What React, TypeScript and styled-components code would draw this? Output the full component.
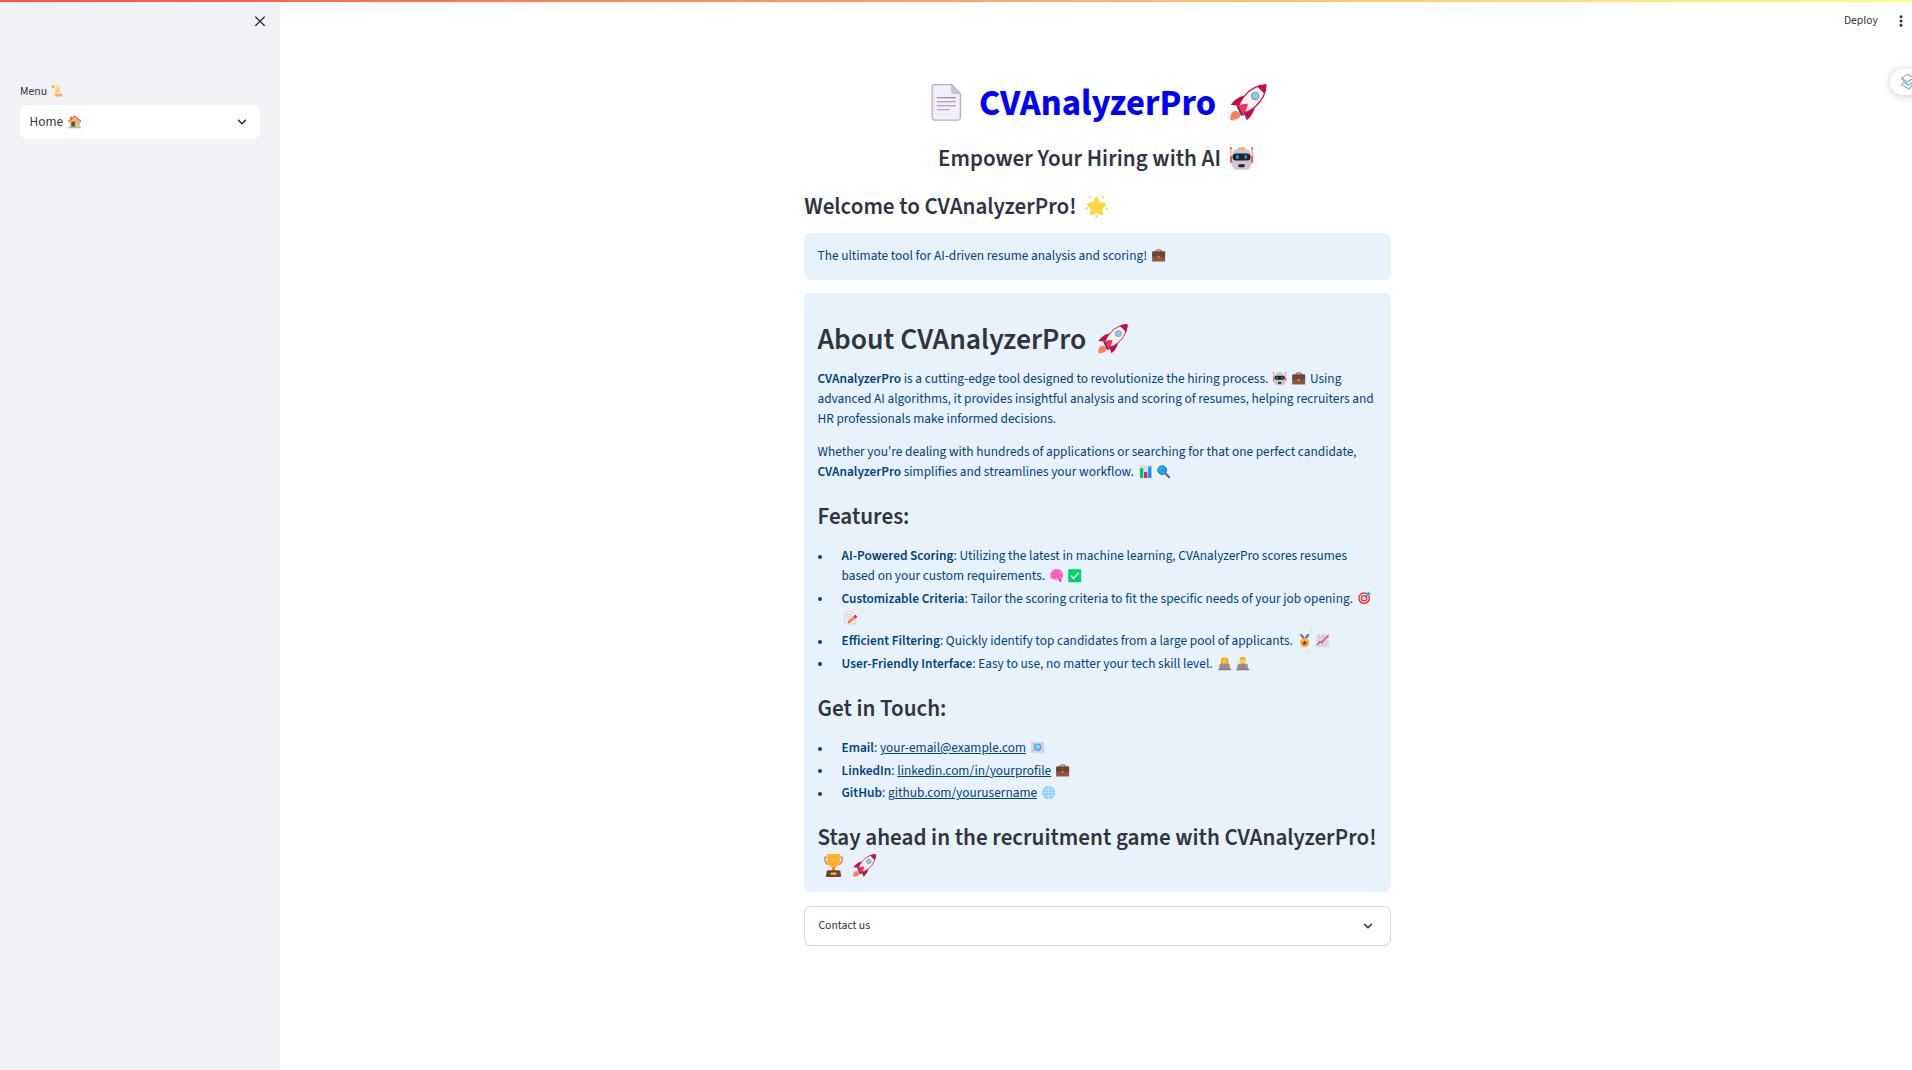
import React from "react";
import styled, { createGlobalStyle } from "styled-components";

const Global = createGlobalStyle`
  *, *::before, *::after { box-sizing: border-box; }
  body {
    margin: 0;
    background: #fff;
    color: #31333f;
    font-family: "Source Sans 3", "Source Sans Pro", "Noto Sans CJK SC", sans-serif;
    font-size: 13.33px;
    font-weight: 400;
    line-height: 20px;
    overflow: hidden;
  }
`;

/* ---------- emoji ---------- */

const Glyph = styled.span`
  display: inline-flex;
  justify-content: center;
  width: 1.36em;
  height: 1em;
  vertical-align: -0.155em;
  line-height: 1;
`;

const Art = styled.svg`
  width: 1em;
  height: 1em;
  flex: none;
  overflow: visible;
`;

const art: Record<string, React.ReactNode> = {
  page: (
    <>
      <path d="M6.500 .7h17l8.300 9V33a2.5 2.5 0 0 1-2.5 2.5H6.500A2.5 2.5 0 0 1 4.100 33V3.2A2.5 2.5 0 0 1 6.500 .7z" fill="#f3eef8" stroke="#b9adc3" strokeWidth="1.3" />
      <path d="M22.700 .7l9.100 9.3H25a2.300 2.300 0 0 1-2.300-2z" fill="#cdc4d6" />
      <path d="M9 13.4h18M9 17.4h18M9 21.4h18M9 25.3h11.3" stroke="#998ea4" strokeWidth="1.1" strokeLinecap="round" />
    </>
  ),
  rocket: (
    <>
      <path d="M2 28c3-3 7-1 8 1 1 3-1 5-4 5.6-2 .4-3 1.400-5.600 1C.4 33 0 30 2 28z" fill="#ff8257" />
      <path d="M14 11.500C10 12 4 15 .8 20.500L8 21.500zM24.500 22c-1 5-3 9-8 13.500L13.500 28z" fill="#ca0b4a" />
      <path d="M35.300.8C27 1 19 5.500 14 12c-2.500 3.200-4.500 6-5 9.500L15 28c3.500-1 6.500-3 9.500-5.500C31 17 35.500 9 35.300.8z" fill="#f4f4f4" stroke="#ca0b4a" strokeWidth="1.200" />
      <path d="M35.700.4C32.500.3 29.500 1 26.500 2.200l7.200 7.300c1.300-3 2-6 2-9.100z" fill="#ca0b4a" />
      <path d="M6.500 22l4-1.500 5 5.500-1.500 4.500-3 1z" fill="#533566" />
      <path d="M8.500 21.500c3-1.700 6-2.500 9-2-.2 4-2 7.500-5 11z" fill="#f92f60" />
      <circle cx="24.700" cy="11.700" r="3.600" fill="#83cbff" stroke="#8b9aa8" strokeWidth="1.200" />
    </>
  ),
  robot: (
    <>
      <path d="M1.500 1.500v24M34.500 1.500v24" stroke="#f8616d" strokeWidth="1.300" />
      <circle cx="1.500" cy="2" r="1.500" fill="#e53950" />
      <circle cx="34.500" cy="2" r="1.500" fill="#e53950" />
      <path d="M.3 14h3v12l-3-3zM35.700 14h-3v12l3-3z" fill="#f8414f" />
      <path d="M12 3q0-2.500 2.500-2.500h7Q24 .5 24 3v2H12z" fill="#ffb02e" />
      <path d="M12 3.500h12c6 0 9 4 9 11V26c0 6-3.500 9.500-9 9.500H12c-5.500 0-9-3.500-9-9.500V14.500c0-7 3-11 9-11z" fill="#cdc4d6" />
      <rect x="4" y="10" width="28" height="11" rx="5.500" fill="#212121" />
      <rect x="9.500" y="12.500" width="4" height="6" rx="1.500" fill="#00a6ed" />
      <rect x="22.500" y="12.500" width="4" height="6" rx="1.500" fill="#00a6ed" />
      <rect x="13" y="27" width="10" height="4.500" rx="1.700" fill="#212121" />
    </>
  ),
  star: (
    <>
      <path d="M18 3.200c1.300 0 2 .8 2.600 2.200l2.600 6 6.500.6c3.300.4 4.200 2.700 1.900 5L27 21.500l1.200 6.300c.6 3.200-1.500 4.500-4.200 3L18 27.500l-6 3.300c-2.700 1.500-4.800.2-4.200-3L9 21.500 4.400 17c-2.300-2.300-1.400-4.600 1.900-5l6.500-.6 2.600-6C16 4 16.700 3.200 18 3.200z" fill="#fcd53f" />
      <path d="M18 31.200c1.300 0 1.900 1.300 1.600 2.800-.3 1.300-2.900 1.300-3.200 0-.3-1.500.3-2.800 1.600-2.800zM7 1.500c1.500-1 4 2.500 2.700 3.600C8.200 6.200 5.300 2.600 7 1.500zM29 1.500c-1.500-1-4 2.500-2.700 3.600C27.800 6.200 30.700 2.600 29 1.500zM.6 21.500c-.8-1.800 3-3.300 3.900-1.600.8 1.800-3.200 3.500-3.900 1.600zM35.400 21.500c.8-1.800-3-3.300-3.900-1.600-.8 1.800 3.200 3.500 3.900 1.600z" fill="#fcd53f" />
    </>
  ),
  briefcase: (
    <>
      <path d="M11 8V5.500Q11 2.500 14 2.500h8Q25 2.500 25 5.500V8" fill="none" stroke="#4a2b23" strokeWidth="2.200" />
      <rect x=".5" y="7" width="35" height="27" rx="2.500" fill="#8c5543" />
      <path d="M3 7h30q2.500 0 2.500 2.500V18q0 3-3 3h-29q-3 0-3-3V9.500Q.5 7 3 7z" fill="#6d4534" />
      <circle cx="18" cy="21" r="3" fill="#f0922b" />
    </>
  ),
  bars: (
    <>
      <rect x="2" y="1" width="32" height="34" rx="2" fill="#ddd3e6" />
      <path d="M12.500 1v34M23 1v34M2 12h32M2 23h32" stroke="#f7f2fb" strokeWidth="1.200" />
      <rect x="2.500" y="9" width="9" height="26" fill="#00c766" />
      <rect x="13.500" y="19" width="9" height="16" fill="#e8168b" />
      <rect x="24.500" y="4" width="9" height="31" fill="#00a6ed" />
    </>
  ),
  magnifier: (
    <>
      <path d="M22 22l11 11" stroke="#635994" strokeWidth="5.500" strokeLinecap="round" />
      <circle cx="14" cy="14" r="12" fill="#0fa4ee" stroke="#4d6fae" strokeWidth="2.600" />
      <path d="M8 13c1-4 4-6 7-6" fill="none" stroke="#7cd0fa" strokeWidth="2" strokeLinecap="round" />
    </>
  ),
  brain: (
    <>
      <path d="M22 24h8v11l-3 .5z" fill="#e5309a" />
      <path d="M7 5C10 0 17-.5 21 1c5-.5 9 2 10 6 4 3 6 8 4.500 12-.5 5.500-4.500 8-8.500 7.500-3 2.500-7 3-9 1.500-3 2-8 2-10-1.500C3 27.500.2 23 .6 18 0 13 3 7 7 5z" fill="#ff6dc6" />
      <path d="M6 14c4-4 8-2 11 0M13 7c4 0 5 3 9 2M21 15c5-2 7 1 9 4M8 21c4 2 8 0 10-2M20 22c3-1 5 0 7 2" fill="none" stroke="#d83b9c" strokeWidth="1.700" strokeLinecap="round" />
    </>
  ),
  check: (
    <>
      <rect x=".5" y=".5" width="35" height="35" rx="2.500" fill="#00d26a" />
      <path d="M8.500 19l6.500 6.500L28 11.500" fill="none" stroke="#fff" strokeWidth="3.600" strokeLinecap="round" strokeLinejoin="round" />
    </>
  ),
  target: (
    <>
      <circle cx="16.500" cy="19.500" r="14" fill="#fff" stroke="#f8312f" strokeWidth="4" />
      <circle cx="16.500" cy="19.500" r="7" fill="#fff" stroke="#f8312f" strokeWidth="4" />
      <path d="M16.500 19.500L28 8" stroke="#3f5fa0" strokeWidth="2.400" strokeLinecap="round" />
      <path d="M23 8l6-7 1.500 4.500L35.500 7l-7 6-5 .5z" fill="#26a9f0" />
    </>
  ),
  memo: (
    <>
      <path d="M4 1h19l8 8v26H4q-2.500 0-2.500-2.500v-29Q1.500 1 4 1z" fill="#f1eaf7" stroke="#c9bdd6" strokeWidth="1.600" />
      <path d="M6 10h17M6 16h17M6 22h12" stroke="#c4b8d0" strokeWidth="1.500" />
      <path d="M10 33l3-8 13.500-11 5.500 5.500-14 11.500z" fill="#ff822d" />
      <path d="M26 14l3.500-3q1.500-1 3 .5l2.500 2.500q1.500 1.500 0 3L31.500 20z" fill="#e8274f" />
      <path d="M10 33l1.500-4 3 2.500z" fill="#5b3a63" />
    </>
  ),
  medal: (
    <>
      <path d="M4 1l9 13 5-3L11 .5z" fill="#1a8fe0" />
      <path d="M32 1l-9 13-5-3L25 .5z" fill="#1a8fe0" />
      <path d="M9 .5l9 12M27 .5l-9 12" stroke="#f8312f" strokeWidth="2.400" />
      <rect x="11" y="10" width="14" height="5" rx="1.500" fill="#e19747" />
      <circle cx="18" cy="23.500" r="12.500" fill="#fcb32c" />
      <path d="M18 17l2.200 4.600 5 .6-3.700 3.500 1 5L18 28.300l-4.500 2.400 1-5-3.700-3.500 5-.6z" fill="#6d4534" />
    </>
  ),
  trend: (
    <>
      <rect x=".5" y=".5" width="35" height="35" rx="2" fill="#e3d9ed" />
      <path d="M9.500 1v34M18 1v34M26.500 1v34M1 9.500h34M1 18h34M1 26.500h34" stroke="#b9aac9" strokeWidth="1" />
      <path d="M3 29l8-8.500 5 3L26 10l4-1 3-5.500" fill="none" stroke="#f8315b" strokeWidth="3" strokeLinecap="round" strokeLinejoin="round" />
    </>
  ),
  woman: (
    <>
      <path d="M8 19V9q1-8.500 10-8.500T28 9v10z" fill="#f0a020" />
      <circle cx="18" cy="10" r="6.500" fill="#ffc83d" />
      <path d="M2.500 32q0-14 10.500-15h10q10.500 1 10.500 15z" fill="#ffb02e" />
      <rect x="4.500" y="18" width="27" height="16" rx="2" fill="#998f99" />
      <rect x=".5" y="32" width="35" height="3.500" rx="1" fill="#857b87" />
      <circle cx="18" cy="25.500" r="2.200" fill="#6b636e" />
    </>
  ),
  man: (
    <>
      <circle cx="18" cy="8.500" r="8.200" fill="#ffc83d" />
      <path d="M10 6.500q1-6.500 8-6.500t8 6.500q-4-2-8-2t-8 2z" fill="#e5a12a" />
      <path d="M15.500 14h5v5h-5z" fill="#ffb02e" />
      <path d="M2.500 32q0-14 10.500-15h10q10.500 1 10.500 15z" fill="#f2bb55" />
      <rect x="4.500" y="18" width="27" height="16" rx="2" fill="#998f99" />
      <rect x=".5" y="32" width="35" height="3.500" rx="1" fill="#857b87" />
      <circle cx="18" cy="25.500" r="2.200" fill="#6b636e" />
    </>
  ),
  email: (
    <>
      <rect x="0" y="3" width="36" height="29" rx="2" fill="#d9cfe4" />
      <path d="M1 4l17 16L35 4M1 31l12-12M35 31L23 19" fill="none" stroke="#a99bbb" strokeWidth="1.300" />
      <circle cx="18" cy="17" r="10" fill="#26aef0" />
      <circle cx="18" cy="17" r="3" fill="none" stroke="#e8f6ff" strokeWidth="1.600" />
      <path d="M21 14v4.500q2.500 1.500 3-2-.5-5.500-6-5.500a6 6 0 1 0 3 11.200" fill="none" stroke="#e8f6ff" strokeWidth="1.300" />
    </>
  ),
  globe: (
    <>
      <circle cx="18" cy="18" r="17.800" fill="#83cbff" />
      <path d="M18 1v34M1 18h34M3.500 10h29M3.500 26h29M18 1c-12 10-12 24 0 34M18 1c12 10 12 24 0 34" fill="none" stroke="#e3f3ff" strokeWidth="1.500" />
    </>
  ),
  trophy: (
    <>
      <path d="M8 5H6Q4 5 4.300 8c.5 5 3 8 7 8.500M28 5h2q2 0 1.700 3c-.5 5-3 8-7 8.500" fill="none" stroke="#d0803a" strokeWidth="2" />
      <rect x="16" y="20" width="4" height="7" fill="#d67d00" />
      <path d="M8 0h20v10c0 6-4 11-10 11S8 16 8 10z" fill="#ffb02e" />
      <path d="M9.500 25.500h17q1.500 0 2 1.500l1.500 7q.3 1.800-1.500 1.800h-21q-1.800 0-1.500-1.800L7.500 27q.4-1.500 2-1.500z" fill="#6d4534" />
      <rect x="13.500" y="28.800" width="9" height="3.600" rx="1" fill="#f9b43a" />
    </>
  ),
  scroll: (
    <>
      <path d="M2 2q2-2 5-1.500h24q-2.500 2-2.500 6V31H11V9H5Q0 6 2 2z" fill="#ffdea7" />
      <path d="M2 2q4-2 6 1.500Q9 7 8 9H5Q-.5 6 2 2z" fill="#d99a52" />
      <path d="M15 12h10M15 17h10M15 22h7" stroke="#e5b878" strokeWidth="2" />
      <path d="M13 28h19q3.500 0 3.500 4 0 3.500-4 3.500H14q-3-1-1-7.500z" fill="#f3ad61" />
    </>
  ),
  house: (
    <>
      <path d="M6 4h6v10H6z" fill="#c58a5a" />
      <path d="M5 16L18.500 4 32 16v16H5z" fill="#fbb95f" />
      <path d="M2 17L18.500 2.500 34 17" fill="none" stroke="#f8504a" strokeWidth="3.200" strokeLinecap="round" />
      <rect x="9" y="18" width="10" height="14" fill="#7d4533" />
      <circle cx="25.500" cy="19.500" r="4.500" fill="#83cbff" />
      <path d="M0 35.500q0-5 5-4.500h26q5-.5 5 4.500z" fill="#66e0a0" />
    </>
  ),
};

const Emoji = ({ name }: { name: string }) => (
  <Glyph>
    <Art viewBox="0 0 36 36" aria-hidden="true">{art[name]}</Art>
  </Glyph>
);

/* ---------- shell ---------- */

const Page = styled.div`
  display: grid;
  grid-template-columns: 280px 1635px;
  width: 1912px;
  height: 1070px;
  overflow: hidden;
  position: relative;
`;

const Ribbon = styled.div`
  position: absolute;
  inset: 0 0 auto 0;
  height: 2px;
  background: linear-gradient(90deg, #ff4b4b, #fffd80);
`;

const Sidebar = styled.aside`
  display: flex;
  flex-direction: column;
  padding: 15px 20px;
  background: #f0f2f6;
`;

const CloseButton = styled.button`
  align-self: flex-end;
  display: flex;
  width: 12px;
  height: 12px;
  margin: 0 -6px 55px 0;
  padding: 0;
  border: 0;
  background: none;
`;

const Label = styled.label`
  margin: 0 0 3px;
  font-size: 11.67px;
  line-height: 20px;
`;

const Select = styled.div`
  display: flex;
  align-items: center;
  justify-content: space-between;
  height: 34px;
  padding: 0 13px 0 9.5px;
  border-radius: 6.67px;
  background: #fff;
`;

const Main = styled.main`
  display: flex;
  flex-direction: column;
  align-items: center;
`;

const Toolbar = styled.header`
  align-self: stretch;
  display: flex;
  justify-content: flex-end;
  align-items: center;
  gap: 17.500px;
  height: 40px;
  margin-bottom: 42px;
  padding: 1px 9.500px 0 0;
  font-size: 11.67px;
`;

const Content = styled.div`
  display: flex;
  flex-direction: column;
  width: 586.67px;
`;

const FloatingTab = styled.div`
  position: absolute;
  top: 69px;
  right: -10px;
  display: flex;
  align-items: center;
  width: 32px;
  height: 26px;
  padding-left: 10px;
  border-radius: 13px 0 0 13px;
  background: #fff;
  box-shadow: 0 1px 8px rgba(0, 0, 0, 0.22);
`;

/* ---------- content ---------- */

const Title = styled.h1`
  margin: 0 0 19.4px;
  color: #0000ff;
  font-size: 36.67px;
  font-weight: 700;
  line-height: 44px;
  text-align: center;
`;

const Heading = styled.h3<{ $center?: boolean; $gap?: string }>`
  margin: ${(p) => p.$gap ?? "21px 0 15.2px"};
  color: #31333f;
  font-size: 23.1px;
  font-weight: 600;
  line-height: 28px;
  text-align: ${(p) => (p.$center ? "center" : "left")};
`;

const BigHeading = styled.h2`
  margin: 0 0 10.8px;
  color: #31333f;
  font-size: 29.7px;
  font-weight: 600;
  line-height: 36px;
`;

const Info = styled.section<{ $pad?: string }>`
  margin-bottom: 13.4px;
  padding: ${(p) => p.$pad ?? "13.33px"};
  border-radius: 6.67px;
  background: #e8f2fc;
  color: #004280;
`;

const Paragraph = styled.p`
  margin: 0 0 13px;
  &:last-of-type { margin-bottom: 0; }
`;

const Strong = styled.strong`
  font-weight: 600;
`;

const List = styled.ul`
  display: flex;
  flex-direction: column;
  gap: 2.67px;
  margin: 0;
  padding: 0;
  list-style: none;
`;

const Item = styled.li`
  display: grid;
  grid-template-columns: 24px 1fr;
  &::before {
    content: "";
    width: 4px;
    height: 4px;
    margin: 8.500px 0 0 0.5px;
    border-radius: 50%;
    background: #004280;
  }
`;

const Link = styled.a`
  color: #004280;
  text-decoration: underline;
`;

const Expander = styled.div`
  display: flex;
  align-items: center;
  justify-content: space-between;
  height: 40.500px;
  margin-top: 0.4px;
  padding: 1px 17px 0 13.3px;
  border: 1px solid rgba(49, 51, 63, 0.2);
  border-radius: 6.67px;
  font-size: 11.67px;
`;

const Chevron = () => (
  <svg width="10" height="10" viewBox="0 0 10 10" fill="none" stroke="#31333f" strokeWidth="1.6" strokeLinecap="round" strokeLinejoin="round" aria-hidden="true">
    <path d="M1.600 3.400L5 6.700l3.400-3.300" />
  </svg>
);

const features: { title: string; text: string; icons: string[] }[] = [
  { title: "AI-Powered Scoring", text: "Utilizing the latest in machine learning, CVAnalyzerPro scores resumes based on your custom requirements.", icons: ["brain", "check"] },
  { title: "Customizable Criteria", text: "Tailor the scoring criteria to fit the specific needs of your job opening.", icons: ["target", "memo"] },
  { title: "Efficient Filtering", text: "Quickly identify top candidates from a large pool of applicants.", icons: ["medal", "trend"] },
  { title: "User-Friendly Interface", text: "Easy to use, no matter your tech skill level.", icons: ["woman", "man"] },
];

const contacts = [
  { title: "Email", link: "your-email@example.com", icon: "email" },
  { title: "LinkedIn", link: "linkedin.com/in/yourprofile", icon: "briefcase" },
  { title: "GitHub", link: "github.com/yourusername", icon: "globe" },
];

export default function App() {
  return (
    <Page>
      <Global />
      <Sidebar>
        <CloseButton aria-label="Close sidebar">
          <svg width="12" height="12" viewBox="0 0 12 12" stroke="#31333f" strokeWidth="1.4" strokeLinecap="round" aria-hidden="true">
            <path d="M1.700 2l8.600 8.400M10.300 2l-8.600 8.400" />
          </svg>
        </CloseButton>
        <Label>Menu <Emoji name="scroll" /></Label>
        <Select>
          <span>Home <Emoji name="house" /></span>
          <Chevron />
        </Select>
      </Sidebar>

      <Main>
        <Toolbar>
          <span>Deploy</span>
          <svg width="10" height="12" viewBox="0 0 10 12" fill="#31333f" aria-hidden="true">
            <circle cx="5" cy="1.700" r="1.500" />
            <circle cx="5" cy="6" r="1.500" />
            <circle cx="5" cy="10.300" r="1.500" />
          </svg>
        </Toolbar>

        <Content>
          <Title><Emoji name="page" /> CVAnalyzerPro <Emoji name="rocket" /></Title>
          <Heading $center $gap="0 0 20px">Empower Your Hiring with AI <Emoji name="robot" /></Heading>
          <Heading $gap="0 0 11.6px">Welcome to CVAnalyzerPro! <Emoji name="star" /></Heading>

          <Info>The ultimate tool for AI-driven resume analysis and scoring! <Emoji name="briefcase" /></Info>

          <Info $pad="29px 13.33px 11.700px">
            <BigHeading>About CVAnalyzerPro <Emoji name="rocket" /></BigHeading>
            <Paragraph>
              <Strong>CVAnalyzerPro</Strong> is a cutting-edge tool designed to revolutionize the hiring process.{" "}
              <Emoji name="robot" /><Emoji name="briefcase" /> Using advanced AI algorithms, it provides insightful analysis and scoring of
              resumes, helping recruiters and HR professionals make informed decisions.
            </Paragraph>
            <Paragraph>
              Whether you're dealing with hundreds of applications or searching for that one perfect candidate,{" "}
              <Strong>CVAnalyzerPro</Strong> simplifies and streamlines your workflow. <Emoji name="bars" /><Emoji name="magnifier" />
            </Paragraph>

            <Heading>Features:</Heading>
            <List>
              {features.map((f) => (
                <Item key={f.title}>
                  <span>
                    <Strong>{f.title}</Strong>: {f.text} {f.icons.map((n) => <Emoji key={n} name={n} />)}
                  </span>
                </Item>
              ))}
            </List>

            <Heading>Get in Touch:</Heading>
            <List>
              {contacts.map((c) => (
                <Item key={c.title}>
                  <span>
                    <Strong>{c.title}</Strong>: <Link>{c.link}</Link> <Emoji name={c.icon} />
                  </span>
                </Item>
              ))}
            </List>

            <Heading $gap="20.600px 0 0">
              Stay ahead in the recruitment game with CVAnalyzerPro! <Emoji name="trophy" /><Emoji name="rocket" />
            </Heading>
          </Info>

          <Expander>
            <span>Contact us</span>
            <Chevron />
          </Expander>
        </Content>
      </Main>

      <FloatingTab>
        <svg width="18" height="18" viewBox="0 0 18 18" fill="none" strokeWidth="1.200" strokeLinejoin="round" aria-hidden="true">
          <path d="M7.500 1.500L1.500 5 4 8.500M4 9l-2.500 3L5 13.500" stroke="#f0a27a" />
          <path d="M7.500 1.500L14 5 7 9 1.500 5M4 9l4 3 6-3.500M5 13.500l4 2.500 5-6.500" stroke="#5fb8bd" />
        </svg>
      </FloatingTab>
      <Ribbon />
    </Page>
  );
}
